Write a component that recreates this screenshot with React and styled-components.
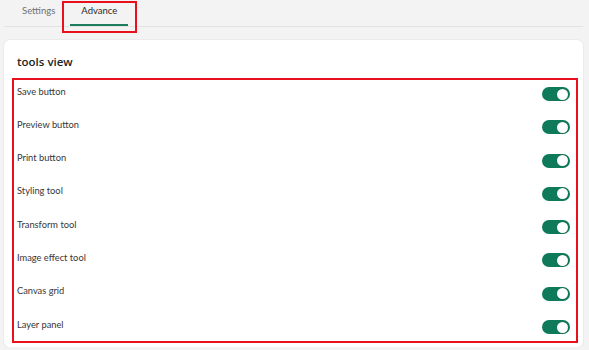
import React, { useState } from 'react';
import styled, { createGlobalStyle } from 'styled-components';

const GlobalStyle = createGlobalStyle`
  html, body {
    margin: 0;
    background: #f3f3f3;
    font-family: Lato, "Open Sans", sans-serif;
    color: #333;
  }
`;

const TOOLS = [
    'Save button',
    'Preview button',
    'Print button',
    'Styling tool',
    'Transform tool',
    'Image effect tool',
    'Canvas grid',
    'Layer panel',
];

const Page = styled.div`
  padding: 0 6px 0 4px;
`;

const TabBar = styled.div`
  display: flex;
  gap: 4px;
  height: 26px;
  padding-left: 7px;
  border-bottom: 1px solid #e2e2e2;
`;

const Tab = styled.div`
  position: relative;
  display: flex;
  align-items: center;
  padding: 0 11px 5px;
  font-size: 9.5px;
  color: ${p => (p.$active ? '#2b2b2b' : '#707070')};
  cursor: pointer;

  &::before {
    content: '';
    display: ${p => (p.$active ? 'block' : 'none')};
    position: absolute;
    left: 0;
    right: 0;
    bottom: 0;
    height: 2px;
    background: #1b7d5c;
  }

  &::after {
    content: '';
    display: ${p => (p.$marked ? 'block' : 'none')};
    position: absolute;
    top: 1px;
    bottom: -7px;
    left: -8px;
    right: -9px;
    border: 2px solid #e8101c;
  }
`;

const Card = styled.section`
  margin-top: 13px;
  padding: 14px 5px 4px 8px;
  background: #fff;
  border-radius: 6px;
  box-shadow: 0 0 0 1px #ebebeb;
`;

const Title = styled.h3`
  margin: 0 0 8px 5px;
  font-family: "Open Sans", sans-serif;
  font-size: 11.5px;
  line-height: 16px;
  font-weight: 600;
  color: #242424;
`;

const List = styled.div`
  display: flex;
  flex-direction: column;
  gap: 5.3px;
  padding: 0 6px 0 3px;
  border: 2px solid #e8101c;
`;

const Row = styled.div`
  display: flex;
  align-items: center;
  justify-content: space-between;
  height: 28px;
`;

const Label = styled.span`
  padding-bottom: 6px;
  font-size: 9.3px;
  color: #363636;
`;

const Switch = styled.button`
  position: relative;
  width: 28px;
  height: 14px;
  padding: 0;
  border: none;
  border-radius: 7px;
  background: ${p => (p.$on ? '#0e7a5a' : '#bdbdbd')};
  cursor: pointer;

  &::after {
    content: '';
    position: absolute;
    top: 1.5px;
    left: ${p => (p.$on ? '15px' : '1.5px')};
    width: 11px;
    height: 11px;
    border-radius: 50%;
    background: #fff;
    box-shadow: 0 0 1px rgba(0, 0, 0, 0.3);
  }
`;

export default function App() {
    const [state, setState] = useState(() => TOOLS.map(() => true));

    const toggle = i => setState(s => s.map((v, j) => (j === i ? !v : v)));

    return (
        <Page>
            <GlobalStyle/>
            <TabBar>
                <Tab>Settings</Tab>
                <Tab $active $marked>Advance</Tab>
            </TabBar>
            <Card>
                <Title>tools view</Title>
                <List>
                    {TOOLS.map((name, i) => (
                        <Row key={name}>
                            <Label>{name}</Label>
                            <Switch $on={state[i]} onClick={() => toggle(i)} aria-label={name}/>
                        </Row>
                    ))}
                </List>
            </Card>
        </Page>
    );
}
